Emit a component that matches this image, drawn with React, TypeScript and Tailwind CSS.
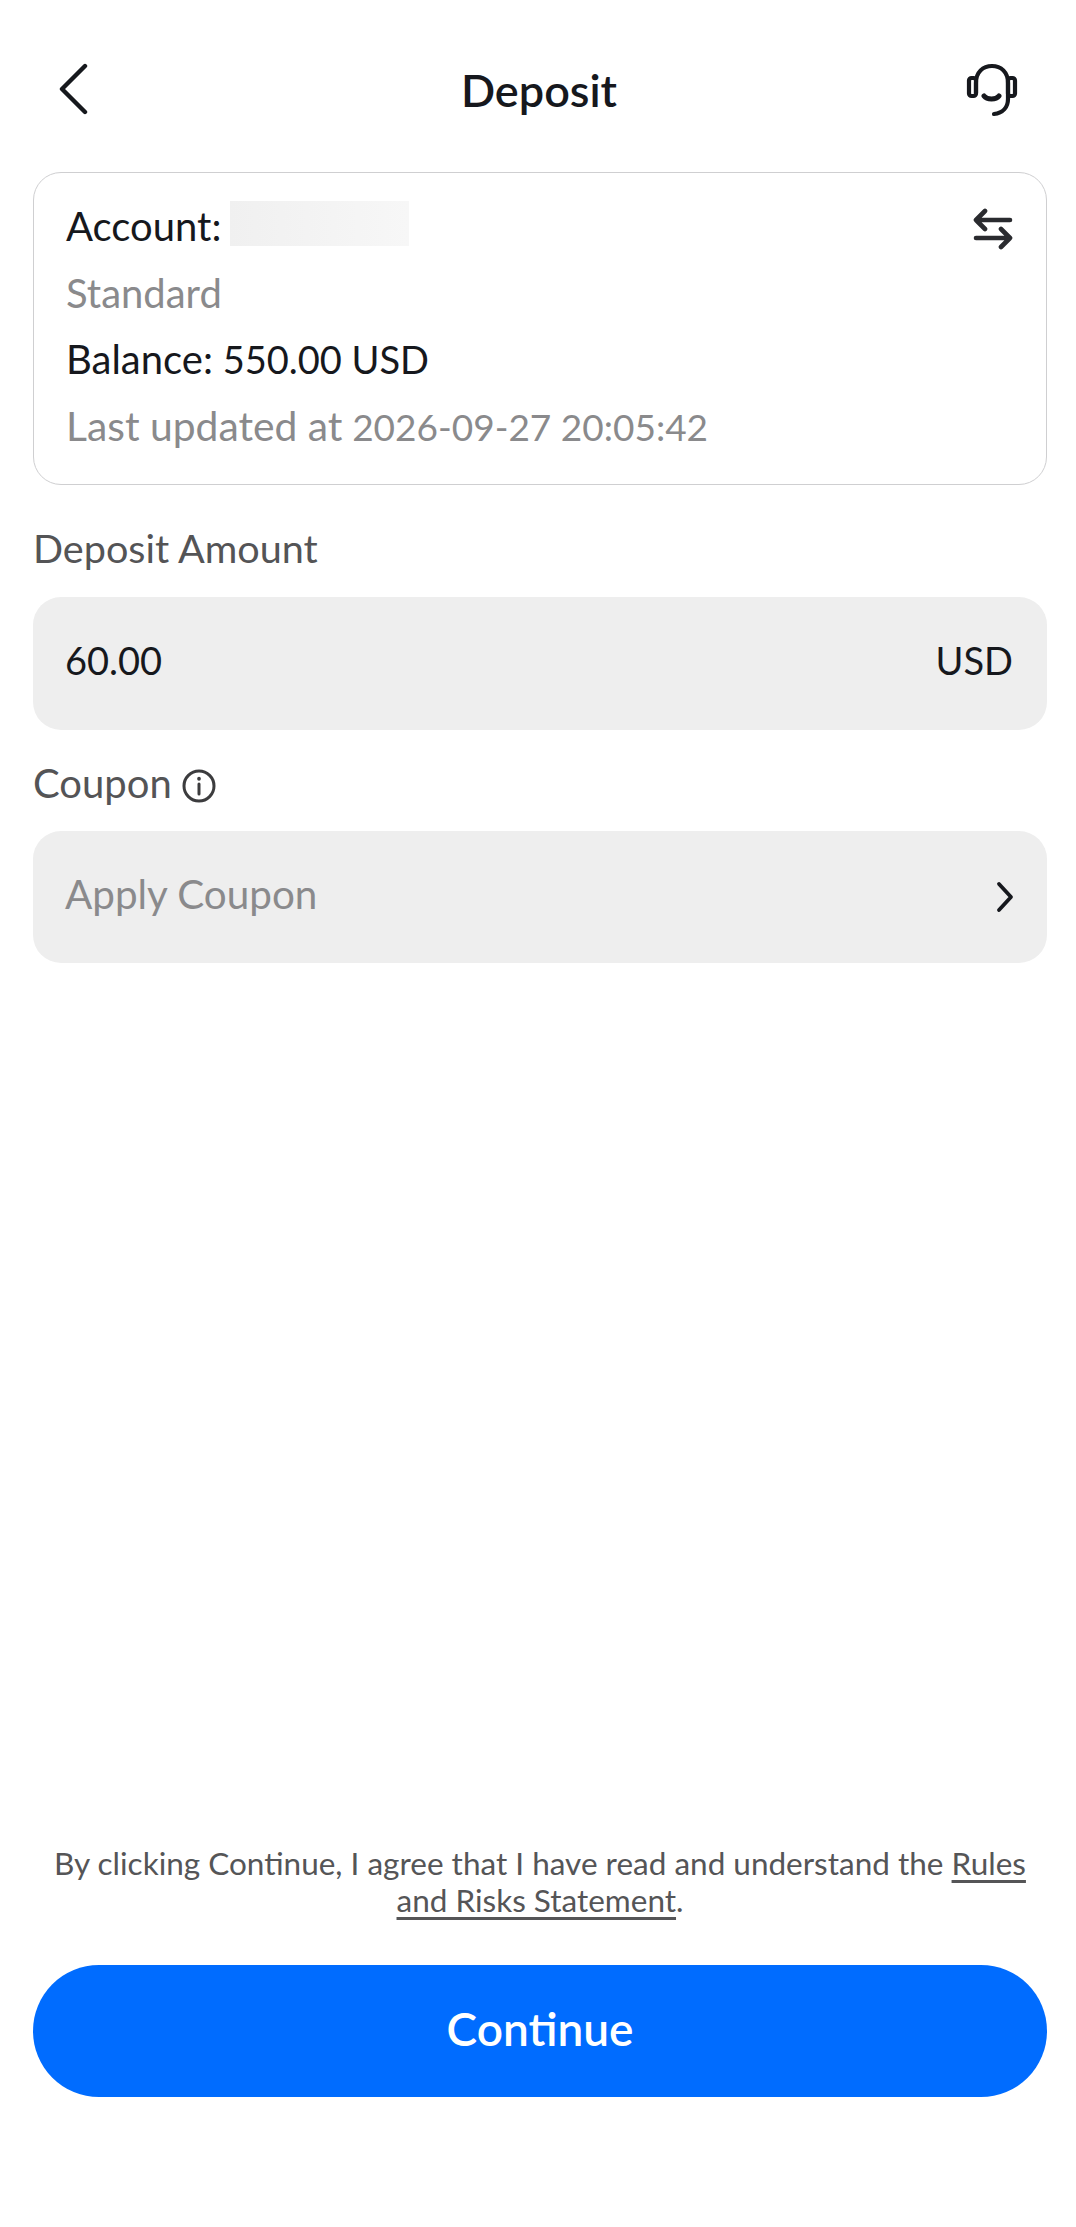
export default function App() {
  return (
    <div className="flex h-[2227px] w-[1076px] flex-col bg-white pl-[33px] pr-[29px] font-['Lato','Noto_Sans',sans-serif] text-[#16181d]">
      <header className="flex h-[172px] items-start justify-between pt-[60px]">
        <svg className="ml-[24px] mt-[3px] h-[52px] w-[32px]" viewBox="0 0 32 52" fill="none" stroke="#16181d" strokeWidth="4.4" strokeLinecap="round" strokeLinejoin="round">
          <path d="M28 3 L5 26 L28 49" />
        </svg>
        <h1 className="ml-[23px] text-[45px] font-semibold leading-[60px] text-[#16181d]">Deposit</h1>
        <svg className="mr-[29px] mt-[3px] h-[54px] w-[52px]" viewBox="0 0 52 54" fill="none" stroke="#16181d" strokeWidth="4.2" strokeLinecap="round" strokeLinejoin="round">
          <path d="M10 30 V20 C10 9 17 3 26 3 C35 3 42 9 42 20 V36 C42 44 37 50 28 51" />
          <rect x="3" y="15" width="7" height="18" rx="2.5" />
          <rect x="42" y="15" width="7" height="18" rx="2.5" />
          <path d="M18 33 C21 37 30 37 33 33" strokeWidth="5" />
        </svg>
      </header>

      <section className="flex h-[313px] items-start justify-between rounded-[28px] border border-[#cfcfd1] pb-[23px] pl-[32px] pr-[33px] pt-[20px]">
        <div className="text-[38px] leading-[66.5px]">
          <div className="flex items-center gap-[9px]">
            <span className="text-[40px]">Account:</span>
            <span className="h-[45px] w-[179px] -translate-y-[3px] bg-gradient-to-r from-[#f0f0f0] to-[#f7f7f7]" />
          </div>
          <div className="text-[40px] text-[#8a8a8c]">Standard</div>
          <div><span className="text-[40px]">Balance:</span> 550.00 USD</div>
          <div className="text-[#8a8a8c]"><span className="text-[40.8px]">Last updated at</span> <span className="text-[37px]">2026-09-27 20:05:42</span></div>
        </div>
        <svg className="mt-[15px] h-[42px] w-[40px]" viewBox="0 0 40 42" fill="none" stroke="#2a2b2f" strokeWidth="4.6" strokeLinecap="round" strokeLinejoin="round">
          <path d="M37 12 H3 M12 3 L3 12 L12 21" />
          <path d="M3 30 H37 M28 21 L37 30 L28 39" />
        </svg>
      </section>

      <label className="mt-[38px] text-[39.6px] leading-[50px] text-[#545456]">Deposit Amount</label>
      <div className="mt-[24px] flex h-[133px] items-center justify-between rounded-[28px] bg-[#eeeeee] pb-[6px] pl-[32px] pr-[34px] text-[38px]">
        <span>60.00</span>
        <span>USD</span>
      </div>

      <div className="mt-[28px] flex items-center gap-[10px] text-[40px] leading-[50px] text-[#545456]">
        <span>Coupon</span>
        <svg className="h-[34px] w-[34px] translate-y-[3px]" viewBox="0 0 34 34" fill="none" stroke="#3c3c3e" strokeWidth="3" strokeLinecap="round">
          <circle cx="17" cy="17" r="15" />
          <path d="M17 15 V25" />
          <path d="M17 9.5 V10" strokeWidth="3.6" />
        </svg>
      </div>
      <div className="mt-[23px] flex h-[132px] items-center justify-between rounded-[28px] bg-[#eeeeee] pl-[32px] pr-[33px] text-[40.4px] text-[#8a8a8c]">
        <span className="-translate-y-[3px]">Apply Coupon</span>
        <svg className="h-[32px] w-[18px]" viewBox="0 0 18 32" fill="none" stroke="#16181d" strokeWidth="3.8" strokeLinecap="round" strokeLinejoin="round">
          <path d="M3 3 L15 16 L3 29" />
        </svg>
      </div>

      <div className="flex-1" />

      <p className="text-center text-[31.5px] leading-[37px] text-[#555557]">
        By clicking Continue, I agree that I have read and understand the <span className="underline underline-offset-[5px]">Rules and Risks Statement</span>.
      </p>
      <button className="mb-[130px] mt-[46px] h-[132px] w-full rounded-full bg-[#006cff] pb-[6px] text-[46px] font-semibold text-white">Continue</button>
    </div>
  );
}
